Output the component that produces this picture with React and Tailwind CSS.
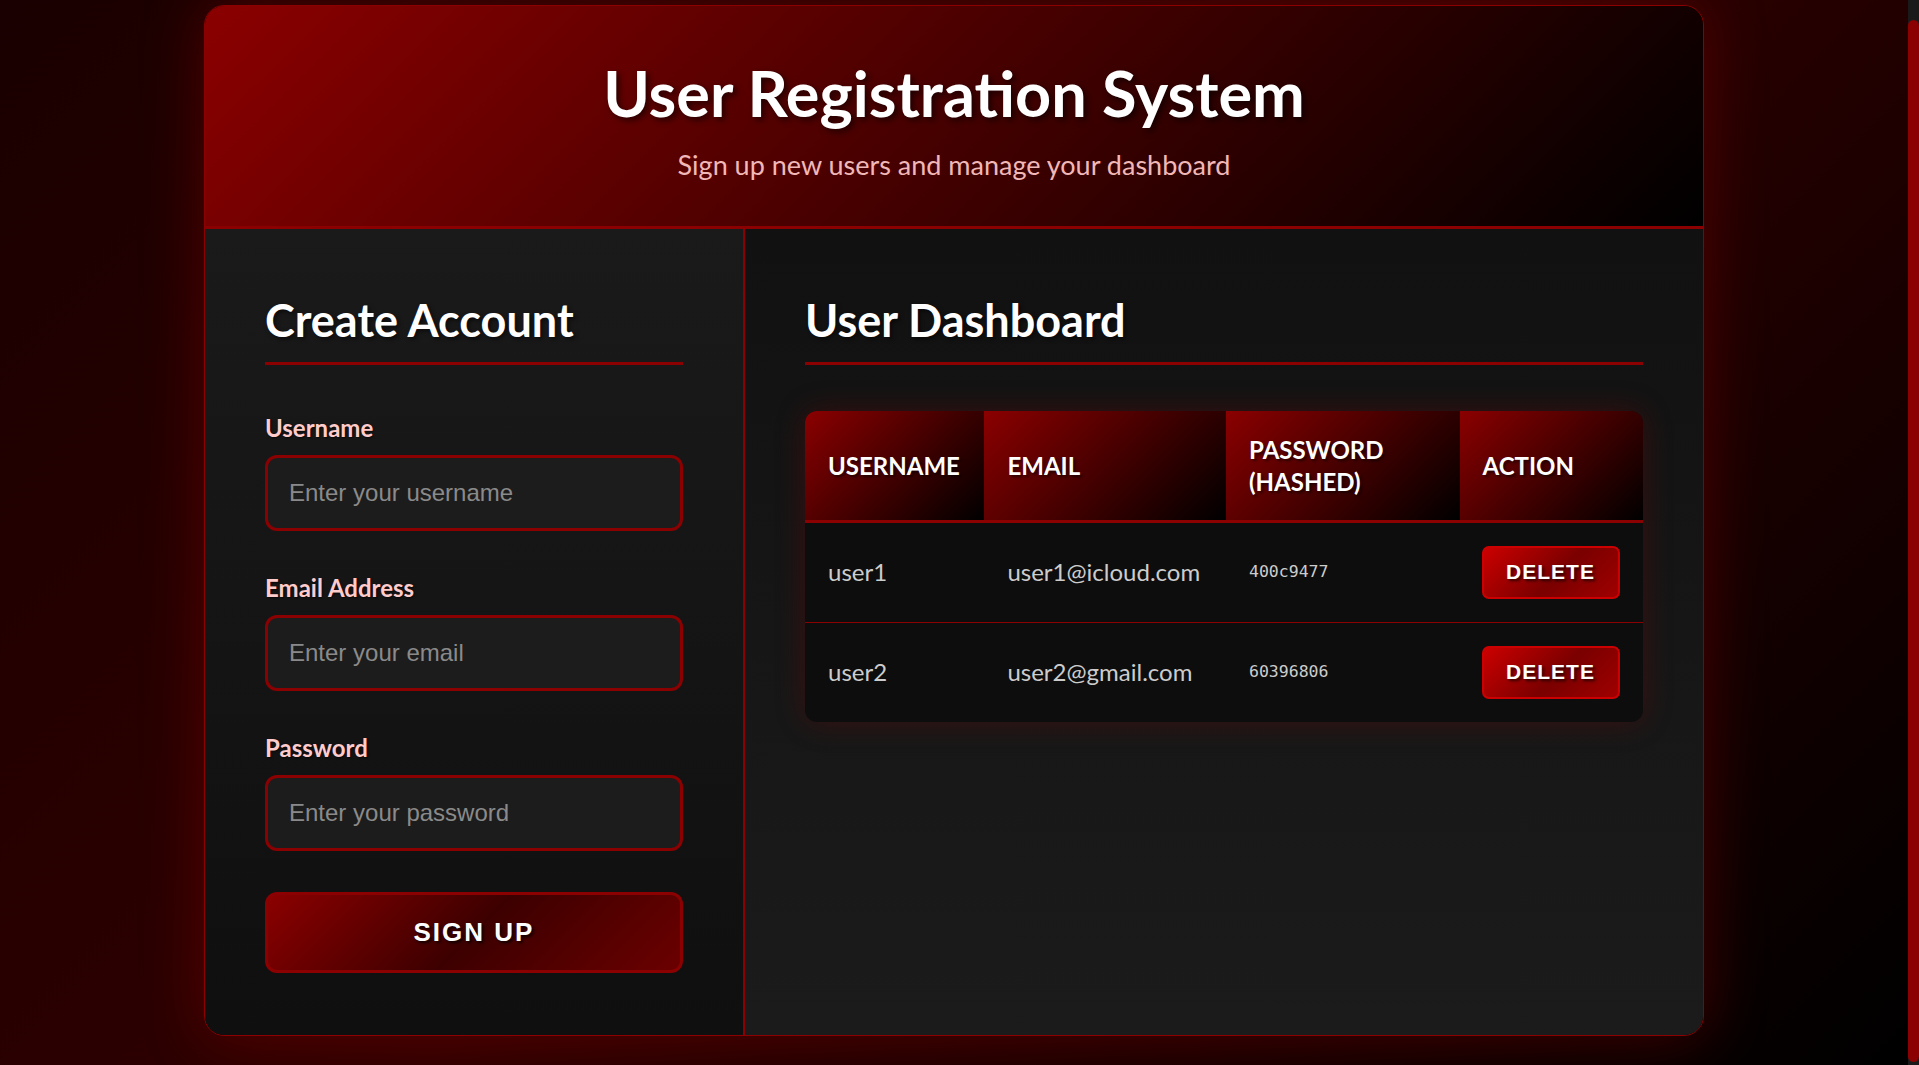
const users = [
  { username: "user1", email: "user1@icloud.com", hash: "400c9477" },
  { username: "user2", email: "user2@gmail.com", hash: "60396806" },
];

function Field({ label, type, placeholder }) {
  return (
    <div className="mb-[40px] flex flex-col">
      <label className="mb-[11px] text-[24px] font-bold leading-[33px] text-[#ffcccc] [text-shadow:1px_1px_2px_rgba(0,0,0,0.7)]">
        {label}
      </label>
      <input
        type={type}
        placeholder={placeholder}
        className="h-[76px] w-full rounded-[12px] border-[3px] border-[#8b0000] bg-[#1c1c1c] px-[21px] font-['Liberation_Sans',Arial,sans-serif] text-[24px] text-white outline-none placeholder:text-[#8a8a8a]"
      />
    </div>
  );
}

const thClass =
  "border-b-[3px] border-[#8b0000] bg-[linear-gradient(135deg,#8b0000_0%,#000000_100%)] px-[23px] pt-[23px] pb-[22px] text-[24px] font-bold leading-[32px] text-white [text-shadow:2px_2px_3px_rgba(0,0,0,0.6)]";

export default function App() {
  return (
    <div className="flex h-screen overflow-hidden font-['Lato','Open_Sans',sans-serif]">
      <main className="flex-1 bg-[linear-gradient(135deg,#1a0000_0%,#300000_50%,#000000_100%)] pt-[5px]">
        <div className="mx-auto w-[1500px] overflow-hidden rounded-[20px] border border-[#8b0000] shadow-[0_0_60px_rgba(139,0,0,0.45)]">
          {/* header */}
          <header className="border-b-[3px] border-[#8b0000] bg-[linear-gradient(135deg,#8b0000_0%,#000000_100%)] pt-[49px] pb-[43px] text-center">
            <h1 className="text-[63px] font-bold leading-[1.2] text-white [text-shadow:3px_3px_6px_rgba(0,0,0,0.6)]">
              User Registration System
            </h1>
            <p className="mt-[16px] text-[27px] leading-[36px] text-[#f2b8b8]">
              Sign up new users and manage your dashboard
            </p>
          </header>

          <div className="flex">
            {/* signup form */}
            <section className="w-[540px] border-r-2 border-[#8b0000] bg-[linear-gradient(180deg,#1a1a1a_0%,#0f0f0f_100%)] px-[60px] pt-[64px] pb-[62px]">
              <h2 className="mb-[46px] border-b-[3px] border-[#8b0000] pb-[15px] text-[45px] font-bold leading-[1.2] text-white [text-shadow:2px_2px_4px_rgba(0,0,0,0.6)]">
                Create Account
              </h2>
              <form onSubmit={(e) => e.preventDefault()}>
                <Field label="Username" type="text" placeholder="Enter your username" />
                <Field label="Email Address" type="email" placeholder="Enter your email" />
                <Field label="Password" type="password" placeholder="Enter your password" />
                <button
                  type="submit"
                  className="mt-[1px] h-[81px] w-full rounded-[12px] border-[3px] border-[#8b0000] bg-[linear-gradient(135deg,#8b0000_0%,#3d0000_50%,#6b0000_100%)] font-['Liberation_Sans',Arial,sans-serif] text-[26px] font-bold tracking-[2px] text-white [text-shadow:2px_2px_3px_rgba(0,0,0,0.8)]"
                >
                  SIGN UP
                </button>
              </form>
            </section>

            {/* dashboard */}
            <section className="flex-1 bg-[linear-gradient(180deg,#111111_0%,#1b1b1b_100%)] px-[60px] pt-[64px] pb-[60px]">
              <h2 className="mb-[46px] border-b-[3px] border-[#8b0000] pb-[15px] text-[45px] font-bold leading-[1.2] text-white [text-shadow:2px_2px_4px_rgba(0,0,0,0.6)]">
                User Dashboard
              </h2>
              <div className="overflow-hidden rounded-[12px] bg-[#0d0d0d] shadow-[0_0_30px_rgba(139,0,0,0.3)]">
                <table className="w-full table-fixed border-collapse text-left">
                  <thead>
                    <tr>
                      <th className={"w-[179px] whitespace-nowrap " + thClass}>USERNAME</th>
                      <th className={"w-[241px] " + thClass}>EMAIL</th>
                      <th className={"w-[233px] " + thClass}>PASSWORD (HASHED)</th>
                      <th className={"w-[183px] " + thClass}>ACTION</th>
                    </tr>
                  </thead>
                  <tbody>
                    {users.map((u, i) => (
                      <tr key={u.username} className={i < users.length - 1 ? "border-b border-[#8b0000]" : ""}>
                        <td className="px-[23px] py-[23px] text-[24px] text-[#cccccc]">{u.username}</td>
                        <td className="px-[23px] py-[23px] text-[24px] text-[#cccccc]">{u.email}</td>
                        <td className="px-[23px] py-[23px] font-['DejaVu_Sans_Mono',monospace] text-[16.5px] text-[#cccccc]">
                          {u.hash}
                        </td>
                        <td className="px-[22px] py-[23px]">
                          <button className="h-[53px] w-[138px] rounded-[7px] border-2 border-[#cc0000] bg-[linear-gradient(135deg,#cc0000_0%,#7a0000_55%,#a00000_100%)] font-['Liberation_Sans',Arial,sans-serif] text-[21px] font-bold tracking-[1px] text-white [text-shadow:2px_2px_3px_rgba(0,0,0,0.7)]">
                            DELETE
                          </button>
                        </td>
                      </tr>
                    ))}
                  </tbody>
                </table>
              </div>
            </section>
          </div>
        </div>
      </main>

      {/* scrollbar */}
      <aside className="w-[11px] bg-[#1a1a1a] pt-[20px] pb-[3px]">
        <div className="h-full rounded-full bg-[#8b0000]" />
      </aside>
    </div>
  );
}
